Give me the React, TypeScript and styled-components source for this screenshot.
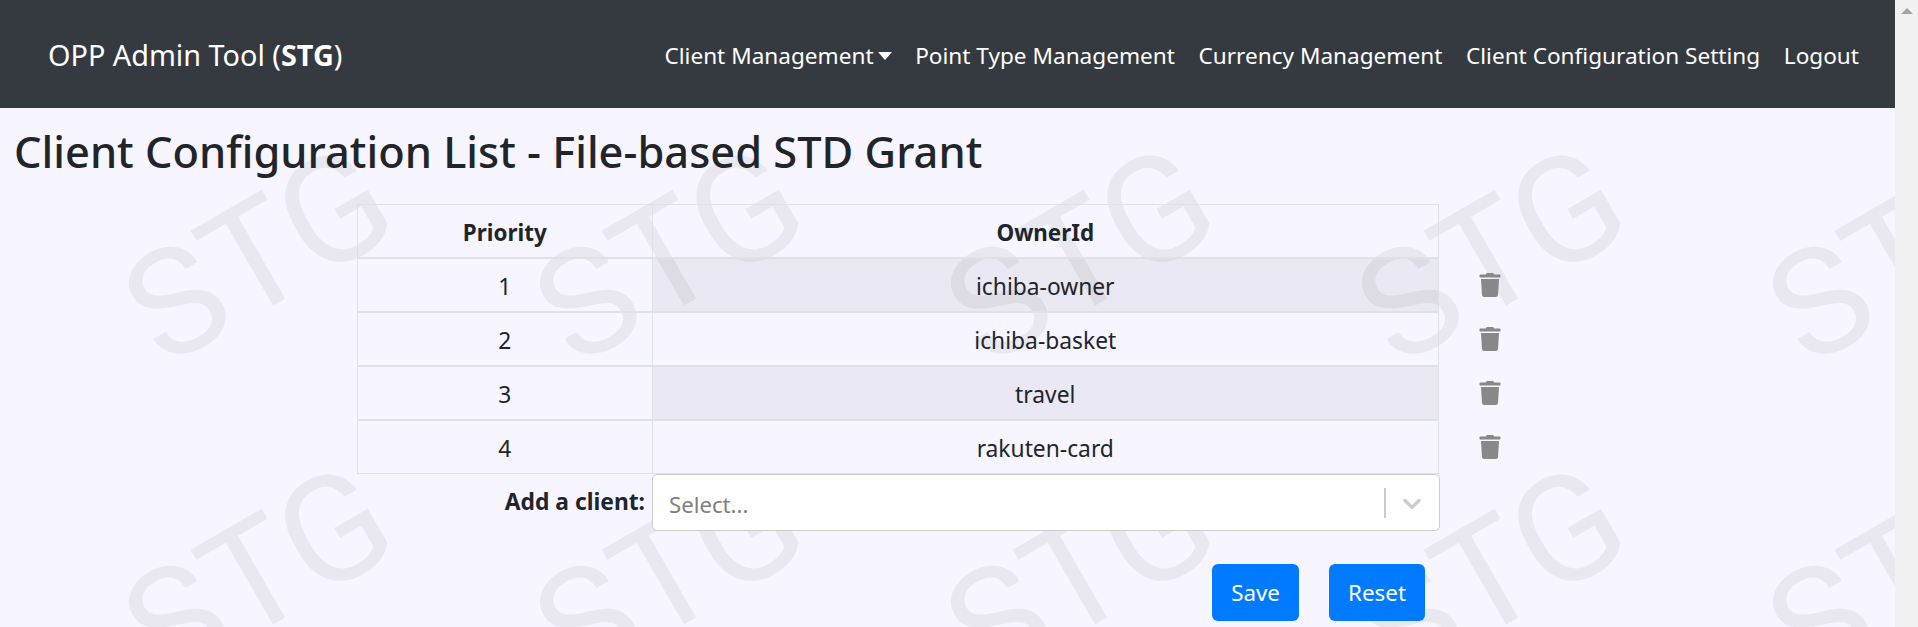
import React from "react";
import styled, { createGlobalStyle } from "styled-components";
import { FaTrash } from "react-icons/fa";

const FONT = `"Noto Sans", "Open Sans", sans-serif`;

const GlobalStyle = createGlobalStyle`
  html, body {
    margin: 0;
    padding: 0;
    height: 627px;
    overflow: hidden;
    font-family: ${FONT};
    color: #212529;
  }
`;

const Shell = styled.div`
  display: grid;
  grid-template-columns: 1fr 23px;
  height: 627px;
  overflow: hidden;
`;

const Page = styled.div`
  display: flex;
  flex-direction: column;
  min-width: 0;
`;

const Scrollbar = styled.div`
  background: #f1f1f1;
  display: flex;
  justify-content: center;
  padding-top: 8px;
`;

const ScrollArrow = styled.div`
  width: 0;
  height: 0;
  border-left: 6px solid transparent;
  border-right: 6px solid transparent;
  border-bottom: 6px solid #a3a3a3;
`;

const Navbar = styled.nav`
  height: 108px;
  flex: none;
  box-sizing: border-box;
  background: #343a40;
  display: flex;
  align-items: center;
  justify-content: space-between;
  padding: 0 36px 0 48px;
  color: #fff;
`;

const Brand = styled.div`
  font-size: 28.8px;
`;

const NavLinks = styled.div`
  display: flex;
  gap: 23.6px;
  font-size: 22.6px;
  padding-top: 2px;
`;

const NavLink = styled.span`
  white-space: nowrap;
`;

const Caret = styled.span`
  display: inline-block;
  margin-left: 4px;
  vertical-align: 4px;
  border-top: 8px solid #fff;
  border-left: 7.5px solid transparent;
  border-right: 7.5px solid transparent;
`;

const Content = styled.main`
  position: relative;
  flex: 1;
  background: #f7f5ff;
  overflow: hidden;
`;

const Watermarks = styled.div`
  position: absolute;
  left: -358px;
  top: -331px;
  display: grid;
  grid-template-columns: repeat(7, 411px);
  grid-auto-rows: 319px;
`;

const Mark = styled.span`
  display: flex;
  align-items: center;
  justify-content: center;
  font-family: Roboto, "Liberation Sans", sans-serif;
  font-size: 149px;
  line-height: 1;
  color: #e9e8f1;
  transform: rotate(-30deg);
`;

const Body = styled.div`
  position: relative;
`;

const Title = styled.h2`
  margin: 0;
  padding: 20px 0 0 14px;
  height: 96px;
  box-sizing: border-box;
  font-size: 43.4px;
  font-weight: 500;
  line-height: 48px;
`;

const Center = styled.div`
  margin-left: 357px;
  width: 1083px;
`;

const Grid = styled.table`
  table-layout: fixed;
  border-collapse: collapse;
  font-size: 22.8px;
`;

const Th = styled.th<{ $w: number }>`
  width: ${(p) => p.$w}px;
  height: 50px;
  padding: 2px 0 0;
  border: 1px solid #dee2e6;
  font-size: 22.4px;
  font-weight: 700;
  text-align: center;
`;

const Td = styled.td<{ $striped?: boolean }>`
  height: 50px;
  padding: 2px 0 0;
  border: 1px solid #dee2e6;
  border-top-width: 2px;
  text-align: center;
  background: ${(p) => (p.$striped ? "rgba(0, 0, 0, 0.05)" : "transparent")};
`;

const TrashCell = styled.td`
  position: relative;
  width: 0;
  padding: 0;
`;

const TrashButton = styled.span`
  position: absolute;
  left: 39px;
  top: 15px;
  display: flex;
  color: #888;
`;

const FormRow = styled.div`
  display: grid;
  grid-template-columns: 295px 1fr;
  height: 57px;
`;

const FormLabel = styled.label`
  font-size: 22.8px;
  font-weight: 700;
  text-align: right;
  padding-right: 7px;
  line-height: 56px;
`;

const Select = styled.div`
  display: flex;
  align-items: center;
  background: #fff;
  border: 1px solid #ccc;
  border-radius: 5px;
  padding: 0 0 0 16px;
  font-size: 22.2px;
  color: #808080;
`;

const Placeholder = styled.span`
  flex: 1;
  padding-top: 4px;
`;

const Separator = styled.span`
  width: 2px;
  height: 30px;
  background: #ccc;
`;

const Chevron = styled.svg`
  margin: 0 12px 0 11px;
`;

const Actions = styled.div`
  display: flex;
  justify-content: flex-end;
  gap: 30px;
  padding: 33px 15px 0 0;
`;

const Button = styled.button`
  height: 57px;
  padding: 0 19px;
  border: 0;
  border-radius: 6px;
  background: #007bff;
  color: #fff;
  font-family: ${FONT};
  font-size: 22.4px;
`;

const clients = ["ichiba-owner", "ichiba-basket", "travel", "rakuten-card"];

export default function App() {
  return (
    <>
      <GlobalStyle />
      <Shell>
        <Page>
          <Navbar>
            <Brand>
              OPP Admin Tool (<strong>STG</strong>)
            </Brand>
            <NavLinks>
              <NavLink>
                Client Management
                <Caret />
              </NavLink>
              <NavLink>Point Type Management</NavLink>
              <NavLink>Currency Management</NavLink>
              <NavLink>Client Configuration Setting</NavLink>
              <NavLink>Logout</NavLink>
            </NavLinks>
          </Navbar>
          <Content>
            <Watermarks>
              {Array.from({ length: 21 }).map((_, i) => (
                <Mark key={i}>STG</Mark>
              ))}
            </Watermarks>
            <Body>
              <Title>Client Configuration List - File-based STD Grant</Title>
              <Center>
                <Grid>
                  <thead>
                    <tr>
                      <Th $w={294}>Priority</Th>
                      <Th $w={787}>OwnerId</Th>
                    </tr>
                  </thead>
                  <tbody>
                    {clients.map((client, i) => (
                      <tr key={client}>
                        <Td>{i + 1}</Td>
                        <Td $striped={i % 2 === 0}>{client}</Td>
                        <TrashCell>
                          <TrashButton>
                            <FaTrash size={24} />
                          </TrashButton>
                        </TrashCell>
                      </tr>
                    ))}
                  </tbody>
                </Grid>
                <FormRow>
                  <FormLabel>Add a client:</FormLabel>
                  <Select>
                    <Placeholder>Select...</Placeholder>
                    <Separator />
                    <Chevron width="30" height="30" viewBox="0 0 20 20" fill="#ccc">
                      <path d="M4.516 7.548c0.436-0.446 1.043-0.481 1.576 0l3.908 3.747 3.908-3.747c0.533-0.481 1.141-0.446 1.574 0 0.436 0.445 0.408 1.197 0 1.615-0.406 0.418-4.695 4.502-4.695 4.502-0.217 0.223-0.502 0.335-0.787 0.335s-0.57-0.112-0.789-0.335c0 0-4.287-4.084-4.695-4.502s-0.436-1.17 0-1.615z" />
                    </Chevron>
                  </Select>
                </FormRow>
                <Actions>
                  <Button>Save</Button>
                  <Button>Reset</Button>
                </Actions>
              </Center>
            </Body>
          </Content>
        </Page>
        <Scrollbar>
          <ScrollArrow />
        </Scrollbar>
      </Shell>
    </>
  );
}
